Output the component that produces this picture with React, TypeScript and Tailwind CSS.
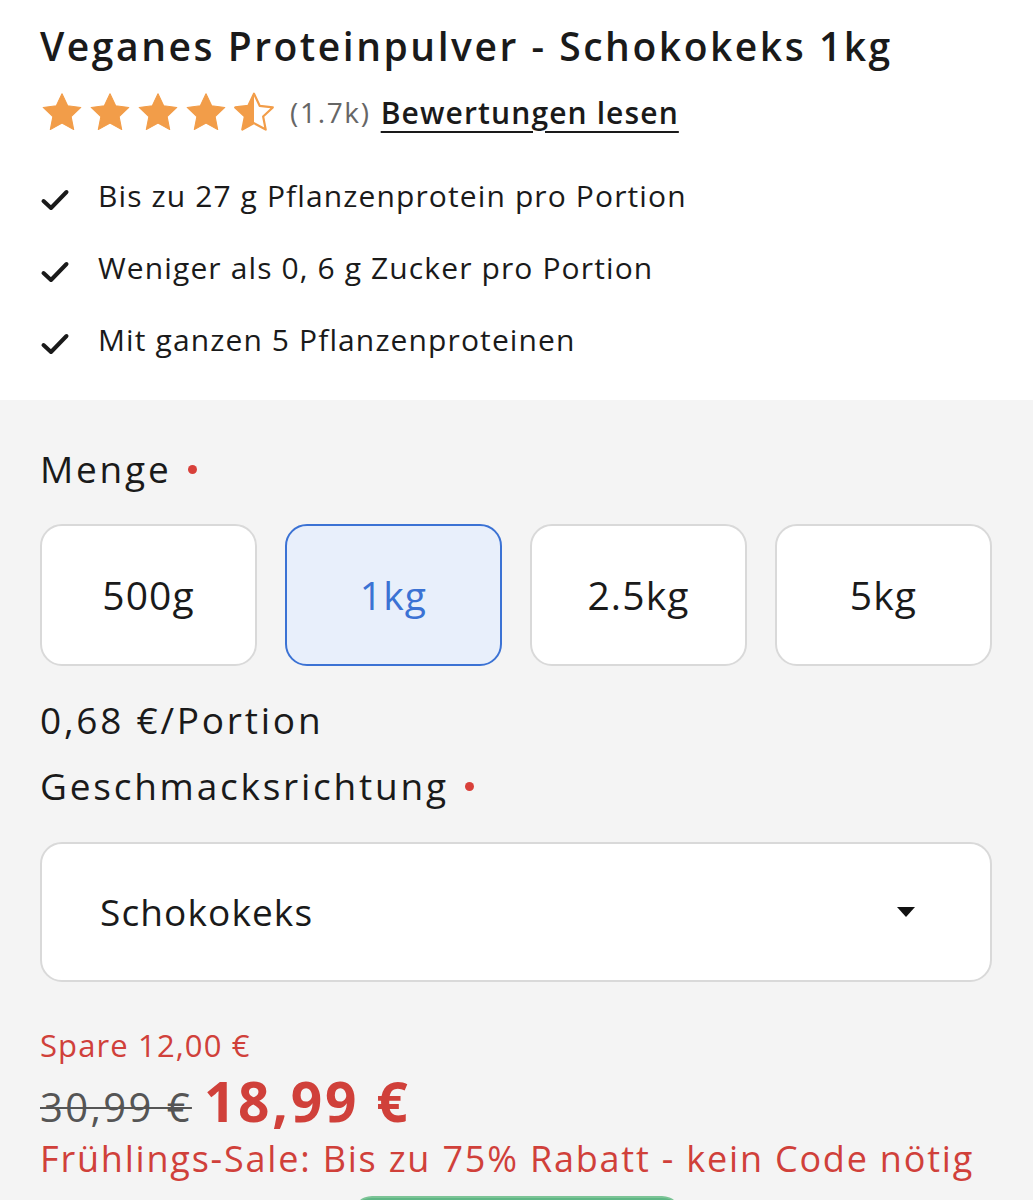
import React from 'react';

const font = { fontFamily: '"Open Sans", Lato, sans-serif' };

function Star({ half = false }: { half?: boolean }) {
  return (
    <svg width="44" height="42" viewBox="0 0 24 23">
      <defs>
        <linearGradient id="halfStar">
          <stop offset="50%" stopColor="#f29d49" />
          <stop offset="50%" stopColor="#ffffff" />
        </linearGradient>
      </defs>
      <path
        d="M12 1.5l3.1 6.6 7.2.9-5.3 5 1.4 7.1L12 17.6l-6.4 3.5 1.4-7.1-5.3-5 7.2-.9z"
        fill={half ? 'url(#halfStar)' : '#f29d49'}
        stroke="#f29d49"
        strokeWidth={half ? 1.2 : 0.6}
        strokeLinejoin="round"
      />
    </svg>
  );
}

function Check() {
  return (
    <svg width="30" height="24" viewBox="0 0 30 24" className="shrink-0">
      <path d="M3.5 13l7.5 7L26.5 4" fill="none" stroke="#1a1a1a" strokeWidth="4" strokeLinecap="round" strokeLinejoin="round" />
    </svg>
  );
}

function Required() {
  return <span className="ml-[16px] w-[9px] h-[9px] rounded-full bg-[#d8403a]" />;
}

const sizes = ['500g', '1kg', '2.5kg', '5kg'];
const features = [
  'Bis zu 27 g Pflanzenprotein pro Portion',
  'Weniger als 0, 6 g Zucker pro Portion',
  'Mit ganzen 5 Pflanzenproteinen',
];

export default function App() {
  return (
    <div className="w-[1033px] h-[1200px] overflow-hidden bg-[#f4f4f4] text-[#1a1a1a] tracking-[0.07em]" style={font}>
      <div className="bg-white h-[400px] pl-10 pr-[41px] pt-[22px]">
        <h1 className="text-[39px] font-semibold leading-[48px] tracking-[0.065em] whitespace-nowrap">
          Veganes Proteinpulver - Schokokeks 1kg
        </h1>
        <div className="flex items-center mt-[20px] h-[44px]">
          <div className="flex gap-[4px]">
            <Star />
            <Star />
            <Star />
            <Star />
            <Star half />
          </div>
          <span className="ml-[14px] text-[28px] text-[#666666] tracking-[0.06em]">(1.7k)</span>
          <span className="ml-[10px] text-[30px] font-semibold underline underline-offset-[7px] decoration-[1.5px]">
            Bewertungen lesen
          </span>
        </div>
        <div className="mt-[42px] flex flex-col gap-[34px]">
          {features.map((f) => (
            <div key={f} className="flex items-center h-[38px]">
              <div className="w-[58px] pt-[10px]">
                <Check />
              </div>
              <span className="text-[30px]">{f}</span>
            </div>
          ))}
        </div>
      </div>

      <div className="pl-10 pr-[41px] pt-[44px]">
        <div className="flex items-center text-[37px] h-[50px] tracking-[0.075em]">
          Menge
          <Required />
        </div>
        <div className="grid grid-cols-4 gap-[28px] mt-[30px]">
          {sizes.map((s) => {
            const active = s === '1kg';
            return (
              <div
                key={s}
                className={
                  active
                    ? 'h-[142px] rounded-[22px] border-2 border-[#3b72d4] bg-[#e8effb] text-[#3b72d4] flex items-center justify-center text-[39px]'
                    : 'h-[142px] rounded-[22px] border-2 border-[#d9d9d9] bg-white flex items-center justify-center text-[39px]'
                }
              >
                {s}
              </div>
            );
          })}
        </div>
        <div className="text-[37px] mt-[32px] h-[44px] flex items-center tracking-[0.075em]">0,68 €/Portion</div>
        <div className="flex items-center text-[37px] mt-[22px] h-[44px] tracking-[0.075em]">
          Geschmacksrichtung
          <Required />
        </div>
        <div className="mt-[34px] h-[140px] rounded-[22px] border-2 border-[#d9d9d9] bg-white flex items-center justify-between pl-[58px] pr-[74px]">
          <span className="text-[37px]">Schokokeks</span>
          <svg width="20" height="12" viewBox="0 0 20 12">
            <path d="M1 1h18L10 11z" fill="#111" />
          </svg>
        </div>
        <div className="mt-[46px] text-[31px] text-[#d0403a] h-[34px] flex items-center">Spare 12,00 €</div>
        <div className="flex items-baseline mt-[10px] h-[58px] leading-[58px]">
          <span className="text-[40px] text-[#555555] line-through decoration-[2px] tracking-[0.06em]">30,99 €</span>
          <span className="ml-[12px] text-[55px] font-bold text-[#d0403a] tracking-[0.05em]">18,99 €</span>
        </div>
        <div className="text-[36px] text-[#d0403a] mt-[6px] h-[46px] flex items-center whitespace-nowrap tracking-[0.05em]">
          Frühlings-Sale: Bis zu 75% Rabatt - kein Code nötig
        </div>
        <div className="mt-[14px] ml-[312px] w-[330px] h-[20px] rounded-t-[20px] bg-[#5fb785] border-t-2 border-[#7cc496]" />
      </div>
    </div>
  );
}
